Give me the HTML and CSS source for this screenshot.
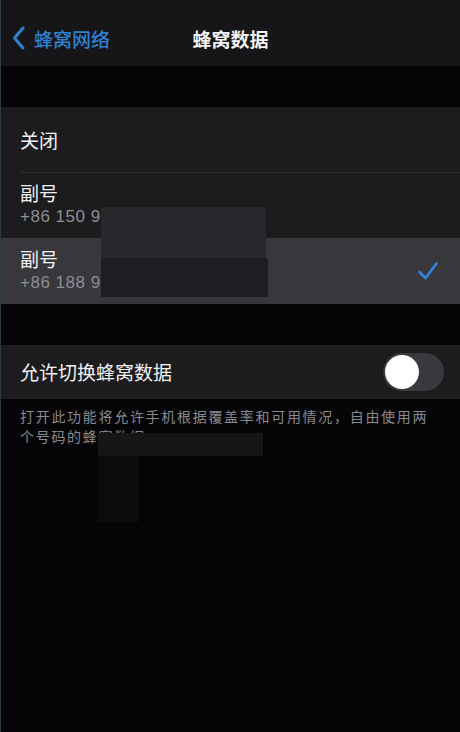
FILE: index.html
```html
<!DOCTYPE html>
<html lang="zh-CN">
<head>
  <meta charset="UTF-8">
  <meta name="viewport" content="width=device-width, initial-scale=1.0">
  <title>蜂窝数据</title>
  <link rel="stylesheet" href="styles.css">
</head>
<body>
  <header class="navbar">
    <a class="back" href="#">
      <svg class="chevron" width="14" height="24" viewBox="0 0 14 24"><path d="M11 2 L2.5 12 L11 22" fill="none" stroke="#2f80d1" stroke-width="3" stroke-linecap="round" stroke-linejoin="round"/></svg>
      <span>蜂窝网络</span>
    </a>
    <h1 class="title">蜂窝数据</h1>
  </header>

  <div class="gap"></div>

  <ul class="group">
    <li class="row"><span class="label">关闭</span></li>
    <li class="row two-line">
      <div>
        <div class="label">副号</div>
        <div class="sub">+86 150 9</div>
      </div>
    </li>
    <li class="row two-line selected">
      <div>
        <div class="label">副号</div>
        <div class="sub">+86 188 9</div>
      </div>
      <svg class="check" width="22" height="20" viewBox="0 0 22 20"><path d="M2.5 11 L8.5 17 L19.5 2.5" fill="none" stroke="#2f86e0" stroke-width="2.6" stroke-linecap="round" stroke-linejoin="round"/></svg>
    </li>
  </ul>

  <div class="gap"></div>

  <div class="group">
    <div class="row switch-row">
      <span class="label">允许切换蜂窝数据</span>
      <span class="switch"><span class="knob"></span></span>
    </div>
  </div>
  <p class="footer">打开此功能将允许手机根据覆盖率和可用情况，自由使用两个号码的蜂窝数据。</p>

  <div class="mask mask-top"></div>
  <div class="mask mask-bottom"></div>
  <div class="mask mask-foot"></div>
  <div class="mask mask-foot-tail"></div>
</body>
</html>
```

FILE: styles.css
```css
body {
  margin: 0;
  background: #050507;
  font-family: "Noto Sans CJK SC", "Liberation Sans", sans-serif;
  color: #f2f2f4;
  border-left: 1px solid #2b3a44;
  min-height: 732px;
  box-sizing: border-box;
  position: relative;
}
.navbar {
  height: 66px;
  padding-top: 10px;
  box-sizing: border-box;
  background: #161618;
  display: flex;
  align-items: center;
  position: relative;
}
.back {
  display: flex;
  align-items: center;
  gap: 8px;
  margin-left: 11px;
  color: #2f80d1;
  text-decoration: none;
  font-size: 19px;
  font-weight: 500;
}
.title {
  position: absolute;
  left: 0;
  right: 0;
  margin: 0;
  text-align: center;
  font-size: 19px;
  font-weight: 700;
  pointer-events: none;
}
.gap {
  height: 41px;
}
.group {
  list-style: none;
  margin: 0;
  padding: 0;
  background: #1c1c1e;
}
.row {
  height: 65px;
  padding: 0 19px;
  display: flex;
  align-items: center;
  justify-content: space-between;
  position: relative;
}
.row + .row::before {
  content: "";
  position: absolute;
  top: 0;
  left: 19px;
  right: 0;
  height: 1px;
  background: #2e2e31;
}
.row.two-line {
  height: 66px;
}
.row.selected {
  background: #38373c;
}
.row.selected::before {
  display: none;
}
.label {
  font-size: 19px;
  line-height: 24px;
}
.sub {
  font-family: "Liberation Sans", sans-serif;
  font-size: 17px;
  line-height: 24px;
  letter-spacing: 0.5px;
  color: #8d8d93;
}
.check {
  margin-right: 2px;
}
.switch-row {
  height: 54px;
}
.switch {
  width: 61px;
  height: 38px;
  border-radius: 19px;
  background: #39393d;
  display: flex;
  align-items: center;
  padding: 2px;
  box-sizing: border-box;
  margin-right: -3px;
}
.knob {
  width: 34px;
  height: 34px;
  border-radius: 50%;
  background: #fff;
}
.footer {
  margin: 7px 19px 0;
  font-size: 14px;
  line-height: 20px;
  color: #8a8a90;
  letter-spacing: 1.7px;
}
.mask {
  position: absolute;
}
.mask-top {
  left: 100px;
  top: 207px;
  width: 165px;
  height: 51px;
  background: #28272b;
}
.mask-bottom {
  left: 100px;
  top: 258px;
  width: 167px;
  height: 39px;
  background: #1e1d21;
}
.mask-foot {
  left: 97px;
  top: 433px;
  width: 165px;
  height: 23px;
  background: #161618;
}
.mask-foot-tail {
  left: 97px;
  top: 456px;
  width: 41px;
  height: 66px;
  background: #0c0c0e;
}
```
